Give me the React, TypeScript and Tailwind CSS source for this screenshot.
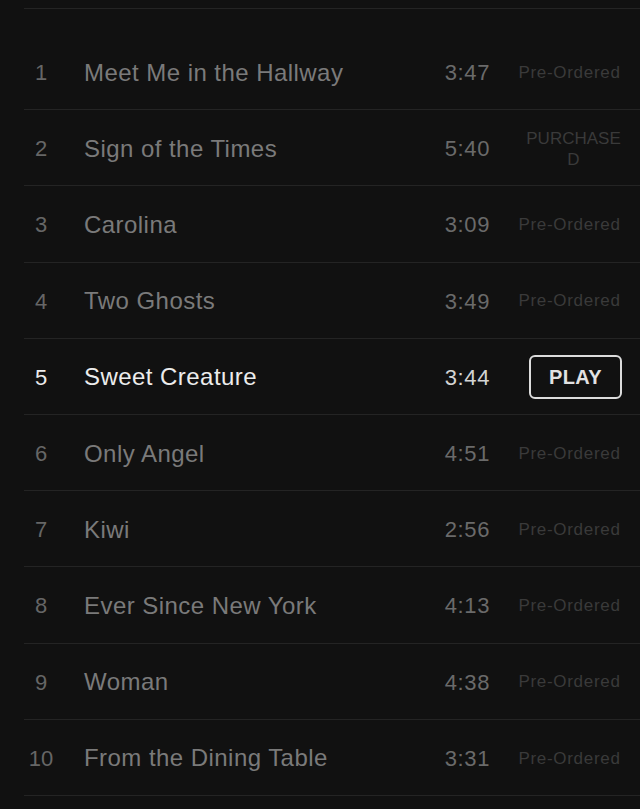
import React from "react";

type Track = { n: number; title: string; dur: string; status: "pre" | "purchased" | "play" };

const tracks: Track[] = [
  { n: 1, title: "Meet Me in the Hallway", dur: "3:47", status: "pre" },
  { n: 2, title: "Sign of the Times", dur: "5:40", status: "purchased" },
  { n: 3, title: "Carolina", dur: "3:09", status: "pre" },
  { n: 4, title: "Two Ghosts", dur: "3:49", status: "pre" },
  { n: 5, title: "Sweet Creature", dur: "3:44", status: "play" },
  { n: 6, title: "Only Angel", dur: "4:51", status: "pre" },
  { n: 7, title: "Kiwi", dur: "2:56", status: "pre" },
  { n: 8, title: "Ever Since New York", dur: "4:13", status: "pre" },
  { n: 9, title: "Woman", dur: "4:38", status: "pre" },
  { n: 10, title: "From the Dining Table", dur: "3:31", status: "pre" },
];

export default function App() {
  return (
    <div
      className="w-[640px] h-[809px] bg-[#111111] overflow-hidden"
      style={{ fontFamily: '"Liberation Sans", Arial, sans-serif' }}
    >
      <div className="h-[8px]" />
      <div className="ml-[24px] border-t border-[#242424] h-[26px]" />
      {tracks.map((t) => {
        const active = t.status === "play";
        return (
          <div
            key={t.n}
            className="ml-[24px] h-[76.2px] border-b border-[#242424] flex items-center pt-[2px]"
          >
            <div
              className={`w-[34px] text-center text-[22px] ${active ? "text-[#ececec]" : "text-[#666666]"}`}
            >
              {t.n}
            </div>
            <div
              className={`ml-[26px] flex-1 text-[24px] tracking-[0.45px] ${active ? "text-[#ececec]" : "text-[#7a7a7a]"}`}
            >
              {t.title}
            </div>
            <div
              className={`text-right text-[22px] tracking-[0.6px] ${active ? "text-[#d4d4d4]" : "text-[#6a6a6a]"}`}
            >
              {t.dur}
            </div>
            <div className="ml-[27px] mr-[18px] w-[105px] flex justify-center">
              {t.status === "pre" && (
                <span className="text-[17px] tracking-[0.7px] text-[#3a3a3a] whitespace-nowrap">
                  Pre-Ordered
                </span>
              )}
              {t.status === "purchased" && (
                <span className="block w-[105px] pl-[8px] text-center text-[17px] leading-[21px] text-[#3a3a3a] break-all">
                  PURCHASED
                </span>
              )}
              {t.status === "play" && (
                <div className="ml-[12px] w-[93px] h-[44px] border-2 border-[#dcdcdc] rounded-[6px] flex items-center justify-center text-[20px] font-bold tracking-[0.4px] text-[#e2e2e2]">
                  PLAY
                </div>
              )}
            </div>
          </div>
        );
      })}
    </div>
  );
}
